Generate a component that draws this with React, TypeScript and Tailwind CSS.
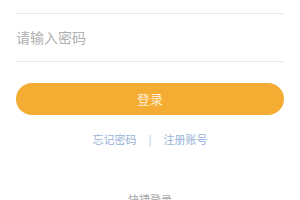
import React from "react";

const font = { fontFamily: '"Noto Sans CJK SC", "Noto Sans", sans-serif' };

export default function App() {
  return (
    <div className="h-[200px] w-[300px] overflow-hidden bg-white" style={font}>
      <div className="px-4 pt-[13px]">
        <div className="h-px bg-[#e8e8e8]" />
        <div className="flex h-[47px] items-center text-[14px] text-[#b0b0b0]">
          请输入密码
        </div>
        <div className="h-px bg-[#e8e8e8]" />
        <button className="mt-[21px] flex h-[32px] w-full items-center justify-center rounded-full bg-[#f5ac33] text-[13px] text-[#fdf0d8]">
          登录
        </button>
        <div className="mt-[16px] flex items-center justify-center gap-3 text-[11px] text-[#98b2d8]">
          <span>忘记密码</span>
          <span className="text-[#b0c4e0]">|</span>
          <span>注册账号</span>
        </div>
        <div className="mt-[43px] text-center text-[11px] text-[#aaa]">快捷登录</div>
      </div>
    </div>
  );
}
